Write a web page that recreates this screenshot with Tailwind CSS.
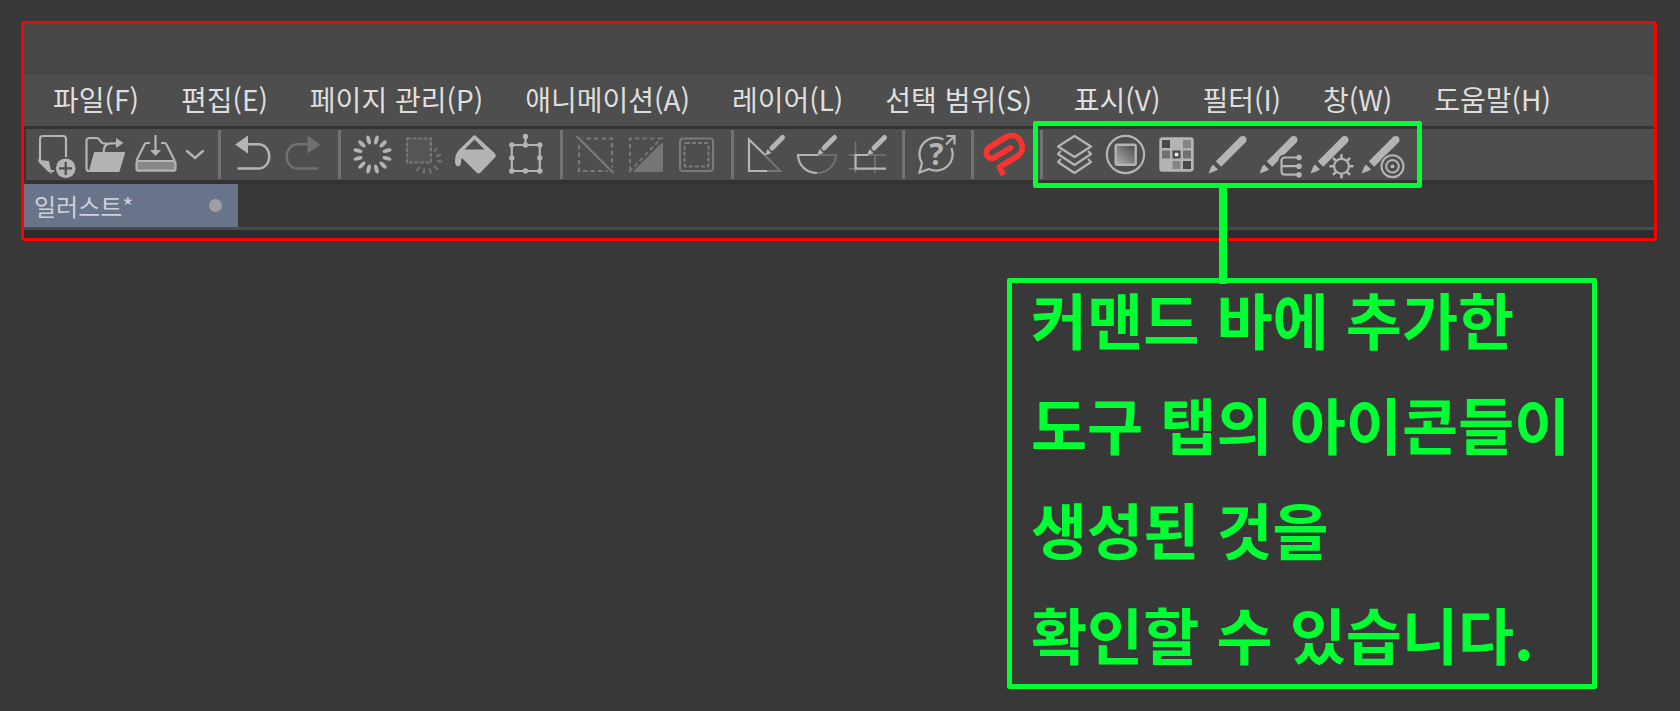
<!DOCTYPE html>
<html lang="ko">

<head>
    <meta charset="UTF-8">
    <meta name="viewport" content="width=device-width, initial-scale=1.0">
    <script src="https://cdn.jsdelivr.net/npm/@tailwindcss/browser@4"></script>
    <title>커맨드 바</title>
</head>

<body class="min-h-screen bg-[#383838] px-[21px] py-[21px] font-['Noto_Sans_CJK_KR',sans-serif]">
    <!-- App window -->
    <div class="mr-0.5 rounded-sm border-3 border-[#ff0000] bg-[#383838]">
        <div class="h-[51px] bg-[#474747]"></div>

        <!-- Menu bar -->
        <nav class="flex h-[51px] items-center gap-[42px] bg-[#4e4e4e] pb-1 pl-[29px] text-[28px] leading-none whitespace-nowrap text-[#dedede]">
            <button type="button">파일(F)</button>
            <button type="button">편집(E)</button>
            <button type="button">페이지 관리(P)</button>
            <button type="button">애니메이션(A)</button>
            <button type="button">레이어(L)</button>
            <button type="button">선택 범위(S)</button>
            <button type="button">표시(V)</button>
            <button type="button">필터(I)</button>
            <button type="button">창(W)</button>
            <button type="button">도움말(H)</button>
        </nav>

        <!-- Command bar -->
        <div class="border-t-3 border-b-4 border-l-2 border-[#333333] bg-[#4e4e4e]">
            <div class="flex h-[51px] items-center pl-[3px] text-[#b4b4b4]">
                <button type="button" aria-label="새로 만들기">
                    <svg class="size-[51px]" viewBox="0 0 51 51" fill="none" stroke="currentColor" stroke-width="2.200">
                        <path d="M37 28V10a3 3 0 0 0-3-3H14a3 3 0 0 0-3 3v23l9 9h5" />
                        <path d="M11 32l8 1 2 9z" fill="currentColor" />
                        <circle cx="36.700" cy="39.300" r="9.800" fill="currentColor" stroke="none" />
                        <path d="M36.700 33v13M30 39.300h13" stroke="#4e4e4e" stroke-width="2.200" />
                    </svg>
                </button>
                <button type="button" aria-label="열기">
                    <svg class="size-[51px]" viewBox="0 0 51 51" fill="none" stroke="currentColor" stroke-width="2.200" stroke-linejoin="round">
                        <path d="M9 42c-2 0-2.500-1-2.500-3V12a3 3 0 0 1 3-3H17c3 0 3 5.500 7 5.500h3" />
                        <path d="M23.500 24c0-6 2-9.700 7-9.700h7" />
                        <path d="M36 9l7.500 5-7.500 5z" fill="currentColor" stroke="none" />
                        <path d="M15 24h29l-5.500 18H10z" fill="currentColor" />
                    </svg>
                </button>
                <button type="button" aria-label="저장">
                    <svg class="size-[51px]" viewBox="0 0 51 51" fill="none" stroke="currentColor" stroke-width="2.200" stroke-linejoin="round">
                        <path d="M19 14h-3.500c-1 0-1.500.5-2 1.500L5.500 31.500M30 14h3.500c1 0 1.500.5 2 1.500l8 16" />
                        <rect x="5.500" y="32" width="39" height="9.700" rx="2" fill="#888888" />
                        <path d="M24.500 6v17" />
                        <path d="M19 21h11l-5.500 6z" fill="currentColor" stroke="none" />
                    </svg>
                </button>
                <button type="button" aria-label="저장 메뉴">
                    <svg class="h-[51px] w-[27px]" viewBox="0 0 27 51" fill="none" stroke="currentColor" stroke-width="2.400" stroke-linecap="round">
                        <path d="M5 22l8 7 8-7" />
                    </svg>
                </button>

                <span class="mr-1.5 ml-[9px] h-[49px] w-[3px] bg-[#727272]"></span>
                <button type="button" aria-label="실행 취소">
                    <svg class="size-[51px]" viewBox="0 0 51 51" fill="none" stroke="currentColor" stroke-width="2.400">
                        <path d="M20 15.300h11c15 0 15 24.200 0 24.200H10.500" />
                        <path d="M8 15.500l13-9v18z" fill="currentColor" stroke="none" />
                    </svg>
                </button>
                <button type="button" aria-label="다시 실행" class="text-[#707070]">
                    <svg class="size-[51px]" viewBox="0 0 51 51" fill="none" stroke="currentColor" stroke-width="2.400">
                        <path d="M31 15.300H20c-15 0-15 24.200 0 24.200h20" />
                        <path d="M42.500 15.500l-13-9v18z" fill="currentColor" stroke="none" />
                    </svg>
                </button>

                <span class="mr-1.5 ml-[9px] h-[49px] w-[3px] bg-[#727272]"></span>
                <button type="button" aria-label="지우기">
                    <svg class="size-[51px]" viewBox="0 0 51 51" fill="currentColor">
                        <g id="petals">
                            <ellipse cx="25.500" cy="10.500" rx="2" ry="4.600" transform="rotate(15 25.500 25.500)" />
                            <ellipse cx="25.500" cy="10.500" rx="2" ry="4.600" transform="rotate(45 25.500 25.500)" />
                            <ellipse cx="25.500" cy="10.500" rx="2" ry="4.600" transform="rotate(75 25.500 25.500)" />
                        </g>
                        <use href="#petals" transform="rotate(90 25.500 25.500)" />
                        <use href="#petals" transform="rotate(180 25.500 25.500)" />
                        <use href="#petals" transform="rotate(270 25.500 25.500)" />
                    </svg>
                </button>
                <button type="button" aria-label="선택 범위 이외 지우기" class="text-[#777777]">
                    <svg class="size-[51px]" viewBox="0 0 51 51" fill="none" stroke="currentColor" stroke-width="2">
                        <rect x="9" y="9.500" width="24" height="24" fill="#555555" stroke-dasharray="4 1.500" />
                        <path d="M36 23l3-4M38 27.500l5-2M39 32l5 .8M36 37l4 3.500M31.500 39.500l1.500 5M26.500 39.500l-1 5M21.500 38l-3 4" />
                    </svg>
                </button>
                <button type="button" aria-label="채색">
                    <svg class="size-[51px]" viewBox="0 0 51 51" fill="currentColor">
                        <path fill-rule="evenodd" d="M24 7q1.500-1.500 3 0l19 17.500q1.500 2 0 4L31.500 43.500q-2 1.800-4 0L13 29c-1 1.500-1 2-1 4.500 0 5-6 5-6-.5 0-7 2-10.500 6-14zM25.500 10.500L15.500 20.500h20z" />
                    </svg>
                </button>
                <button type="button" aria-label="확대/축소/회전">
                    <svg class="size-[51px]" viewBox="0 0 51 51" fill="currentColor">
                        <path d="M11.800 16h28v26h-28zM25.500 16V7" fill="none" stroke="currentColor" stroke-width="2.200" />
                        <circle cx="11.800" cy="16" r="2.700" />
                        <circle cx="25.500" cy="16" r="2.700" />
                        <circle cx="39.800" cy="16" r="2.700" />
                        <circle cx="11.800" cy="29" r="2.700" />
                        <circle cx="39.800" cy="29" r="2.700" />
                        <circle cx="11.800" cy="42" r="2.700" />
                        <circle cx="25.500" cy="42" r="2.700" />
                        <circle cx="39.800" cy="42" r="2.700" />
                        <circle cx="25.500" cy="7.500" r="2.700" />
                    </svg>
                </button>

                <span class="mr-1.5 ml-[9px] h-[49px] w-[3px] bg-[#727272]"></span>
                <button type="button" aria-label="선택 해제" class="text-[#7a7a7a]">
                    <svg class="size-[51px]" viewBox="0 0 51 51" fill="none" stroke="currentColor" stroke-width="2.100">
                        <rect x="10" y="9.500" width="33" height="32.500" stroke-dasharray="4.500 3" />
                        <path d="M7.500 7l37 37" stroke="#4e4e4e" stroke-width="6" />
                        <path d="M7.500 7l37 37" />
                    </svg>
                </button>
                <button type="button" aria-label="선택 범위 반전" class="text-[#757575]">
                    <svg class="size-[51px]" viewBox="0 0 51 51" fill="none" stroke="currentColor" stroke-width="2.100">
                        <path d="M10 42V9.500h31z" stroke-dasharray="4.500 3" />
                        <path d="M42 15v27H15z" fill="currentColor" stroke-linejoin="round" />
                    </svg>
                </button>
                <button type="button" aria-label="선택 범위의 경계선 표시" class="text-[#7a7a7a]">
                    <svg class="size-[51px]" viewBox="0 0 51 51" fill="none" stroke="currentColor" stroke-width="2.100">
                        <rect x="9" y="9.500" width="33" height="32.500" rx="3" />
                        <rect x="13.500" y="14" width="24" height="23.500" rx="1.500" stroke-dasharray="4 2" />
                    </svg>
                </button>

                <span class="mr-1.5 ml-[9px] h-[49px] w-[3px] bg-[#727272]"></span>
                <button type="button" aria-label="자에 스냅">
                    <svg class="size-[51px]" viewBox="0 0 51 51" fill="none" stroke="currentColor" stroke-width="2.200">
                        <path d="M25 26.500L40.500 42H27" stroke="#777777" stroke-width="1.800" />
                        <path d="M25 26L9 10.500V42h18" />
                        <g id="small-pen" stroke-width="5" stroke-linecap="round">
                            <path d="M42.500 8.500L32 19" />
                            <path d="M27.500 20l4 4-2.500 1-4 1.500 1.500-4z" fill="currentColor" stroke="none" />
                        </g>
                    </svg>
                </button>
                <button type="button" aria-label="특수자에 스냅">
                    <svg class="size-[51px]" viewBox="0 0 51 51" fill="none" stroke="currentColor" stroke-width="2.200">
                        <path d="M26 26h19c-.5 11-9 18-19 18" stroke="#777777" stroke-width="1.600" />
                        <path d="M27 26H7c.5 11 9 18 19 18" />
                        <use href="#small-pen" x="1" />
                    </svg>
                </button>
                <button type="button" aria-label="그리드에 스냅">
                    <svg class="size-[51px]" viewBox="0 0 51 51" fill="none" stroke="currentColor" stroke-width="2.200">
                        <path d="M7 26h37M7 39.700h8M13.500 13v31M33 26v18" stroke="#777777" stroke-width="1.600" />
                        <path d="M26 26H13.500v13.700H44" />
                        <use href="#small-pen" />
                    </svg>
                </button>

                <span class="mr-1.5 ml-[9px] h-[49px] w-[3px] bg-[#727272]"></span>
                <button type="button" aria-label="지원">
                    <svg class="size-[51px]" viewBox="0 0 51 51" fill="none" stroke="currentColor" stroke-width="2.200">
                        <path d="M32.500 10.500A16.500 16.500 0 0 0 11 34L8.500 43.500 18 40A16.500 16.500 0 0 0 40.500 19" />
                        <path d="M35 15.500l8-8M35.500 7h8v8.500" />
                        <text x="25.300" y="36" text-anchor="middle" font-size="30" font-weight="700" fill="currentColor" stroke="none" font-family="Open Sans, sans-serif">?</text>
                    </svg>
                </button>

                <span class="mr-1.5 ml-[9px] h-[49px] w-[3px] bg-[#727272]"></span>
                <button type="button" aria-label="CLIP STUDIO 열기" class="text-[#ff3232]">
                    <svg class="size-[51px]" viewBox="0 0 51 51" fill="none" stroke="currentColor" stroke-width="5.600">
                        <path d="M23.500 46l-4-8 17.500-10.500C47 20.500 41 6 31 6.500c-2 0-3.500.7-5 1.500L9 18.500C3 23.500 8 32 14.500 28.500L31 18.500" stroke-linejoin="round" />
                        <circle cx="30.500" cy="18.800" r="2.800" fill="currentColor" stroke="none" />
                    </svg>
                </button>

                <span class="mr-1.5 ml-[9px] h-[49px] w-[3px] bg-[#727272]"></span>
                <!-- Tool tab icons, marked with a callout frame -->
                <div class="relative flex">
                    <button type="button" aria-label="레이어">
                        <svg class="size-[51px]" viewBox="0 0 51 51" fill="none" stroke="currentColor" stroke-width="2.200" stroke-linejoin="round">
                            <path d="M25.500 7L42 17.500 25.500 28 9 17.500z" />
                            <path d="M12 22l-3 3 16.500 11L42 25l-3-3" />
                            <path d="M12 30l-3 3 16.500 11L42 33l-3-3" />
                        </svg>
                    </button>
                    <button type="button" aria-label="레이어 속성">
                        <svg class="size-[51px]" viewBox="0 0 51 51" fill="none" stroke="currentColor" stroke-width="2.200">
                            <defs>
                                <linearGradient id="shade" x1="0" y1="1" x2="1" y2="0">
                                    <stop offset="0" stop-color="#b0b0b0" />
                                    <stop offset="1" stop-color="#484848" />
                                </linearGradient>
                            </defs>
                            <circle cx="25.500" cy="25.500" r="18.600" />
                            <rect x="15.700" y="15.700" width="20" height="20" rx="1.500" fill="url(#shade)" stroke-width="2.400" />
                        </svg>
                    </button>
                    <button type="button" aria-label="컬러 세트">
                        <svg class="size-[51px]" viewBox="0 0 51 51">
                            <rect x="8.300" y="8.300" width="34.400" height="34.400" rx="3" fill="currentColor" />
                            <path d="M11 11h8v8h-8zM32 32h8v8h-8z" fill="#484848" />
                            <path d="M32 11h8v8h-8zM21.500 32h8v8h-8z" fill="#858585" />
                            <path d="M11 21.500h8v8h-8zM32 21.500h8v8h-8z" fill="#707070" />
                            <path d="M21.500 21.500h8v8h-8z" fill="#484848" />
                            <path d="M23.800 23.800h3.500v3.500h-3.500z" fill="#eeeeee" />
                        </svg>
                    </button>
                    <button type="button" aria-label="도구">
                        <svg class="size-[51px]" viewBox="0 0 51 51" fill="currentColor">
                            <g id="pen">
                                <path d="M40.500 11L16.500 35" fill="none" stroke="currentColor" stroke-width="7.600" />
                                <circle cx="40.700" cy="10.800" r="3.800" />
                                <path d="M11 35.500l5 5-2.500 1.500L6.500 44.500 9 38z" />
                            </g>
                        </svg>
                    </button>
                    <button type="button" aria-label="보조 도구">
                        <svg class="size-[51px]" viewBox="0 0 51 51" fill="currentColor">
                            <use href="#pen" />
                            <path d="M46 28.500H32q-3.500 0-3.500 3.500v10.200q0 3.500 3.500 3.500h14M28.500 37.200H46" fill="none" stroke="#4e4e4e" stroke-width="6" />
                            <path d="M46 28.500H32q-3.500 0-3.500 3.500v10.200q0 3.500 3.500 3.500h14M28.500 37.200H46" fill="none" stroke="currentColor" stroke-width="2.200" />
                            <circle cx="46" cy="28.500" r="2.800" />
                            <circle cx="46" cy="37.200" r="2.800" />
                            <circle cx="46" cy="45.700" r="2.800" />
                        </svg>
                    </button>
                    <button type="button" aria-label="도구 속성">
                        <svg class="size-[51px]" viewBox="0 0 51 51" fill="currentColor">
                            <use href="#pen" />
                            <circle cx="37.500" cy="37.300" r="11.500" fill="#4e4e4e" />
                            <circle cx="37.500" cy="37.300" r="7.400" fill="none" stroke="currentColor" stroke-width="2.200" />
                            <path d="M37.500 25.300v5M37.500 44.300v5M25.500 37.300h5M44.500 37.300h5M29 28.800l3.500 3.500M42.500 42.300l3.500 3.500M29 45.800l3.500-3.500M42.500 32.300l3.500-3.500" fill="none" stroke="currentColor" stroke-width="2.600" />
                        </svg>
                    </button>
                    <button type="button" aria-label="브러시 크기">
                        <svg class="size-[51px]" viewBox="0 0 51 51" fill="currentColor">
                            <use href="#pen" />
                            <circle cx="37.500" cy="37.300" r="13" fill="#4e4e4e" />
                            <g fill="none" stroke="currentColor" stroke-width="2">
                                <circle cx="37.500" cy="37.300" r="11" />
                                <circle cx="37.500" cy="37.300" r="6.300" />
                            </g>
                            <circle cx="37.500" cy="37.300" r="1.900" />
                        </svg>
                    </button>
                    <div class="absolute -top-2 -right-4 -bottom-2 -left-4 rounded-xs border-5 border-[#00ff33]"></div>
                    <div class="absolute top-[59px] left-[170px] h-24 w-2 bg-[#00ff33]"></div>
                </div>
            </div>
        </div>

        <!-- Document tabs -->
        <div class="flex h-[43px] text-[#cdd0d6]">
            <button type="button" class="flex w-[214px] items-center justify-between bg-[#69738a] pr-4 pl-2.5 text-[24px] leading-none">
                일러스트*
                <span class="size-[13px] rounded-full bg-[#a0a0a0]"></span>
            </button>
        </div>
        <div class="h-[11px] border-t-3 border-[#4a4a4a] bg-[#2c2c2c]"></div>
    </div>

    <!-- Callout note -->
    <p class="mt-[37px] mr-[62px] ml-auto flex w-[590px] flex-col gap-[41px] rounded-xs border-5 border-[#00ff33] pt-1 pb-[18px] pl-[19px] text-[61px] leading-[64px] font-bold whitespace-nowrap text-[#00ff33]">
        <span>커맨드 바에 추가한</span>
        <span>도구 탭의 아이콘들이</span>
        <span>생성된 것을</span>
        <span>확인할 수 있습니다.</span>
    </p>
</body>

</html>
